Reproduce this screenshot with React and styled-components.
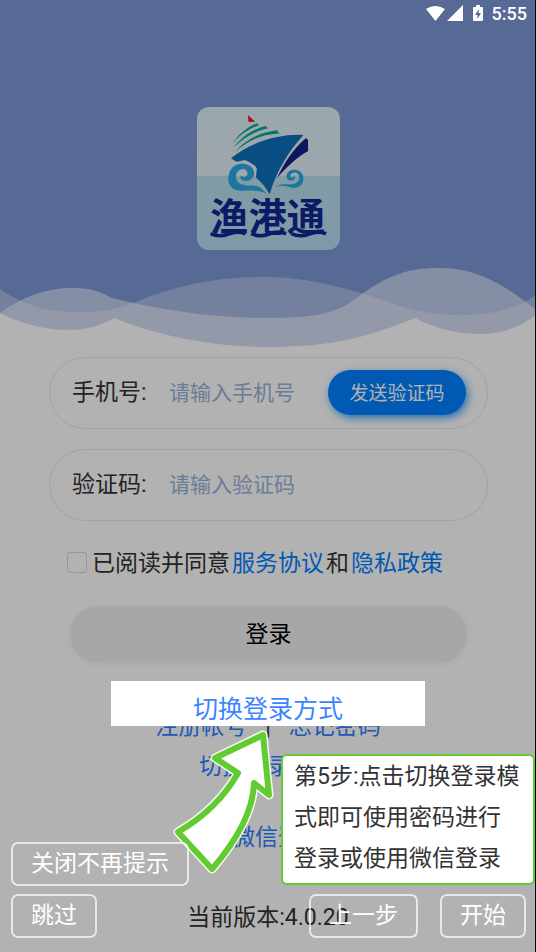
import React from 'react';
import styled, { createGlobalStyle } from 'styled-components';

const GlobalStyle = createGlobalStyle`
  * { box-sizing: border-box; }
  body {
    margin: 0;
    background: #fff;
    font-family: Roboto, "Noto Sans CJK SC", sans-serif;
    font-size: 23px;
    line-height: 28px;
    color: #333;
  }
  button, input { font-family: inherit; }
`;

const Screen = styled.div`
  position: relative;
  min-height: 100vh;
  overflow: hidden;
  display: flex;
  flex-direction: column;
`;

const Hero = styled.header`
  background: linear-gradient(#7c99d6 0 90%, #fff 90%);
  display: flex;
  flex-direction: column;
  align-items: center;
`;

const StatusBar = styled.div`
  position: relative;
  z-index: 3;
  align-self: stretch;
  height: 27px;
  padding-right: 9px;
  display: flex;
  justify-content: flex-end;
  align-items: center;
  color: #fff;
  font-size: 18px;
  font-weight: 500;
  line-height: 27px;
`;

const StatusIcons = styled.svg`
  width: 58px;
  height: 18px;
  margin-right: 8px;
`;

const Logo = styled.svg`
  width: 143px;
  height: 143px;
  margin: 80px 0 10px;
  border-radius: 12px;
`;

const LogoText = styled.text`
  font-family: "Noto Sans CJK SC", sans-serif;
  font-weight: 700;
  font-size: 115px;
  fill: #122891;
`;

const Waves = styled.svg`
  display: block;
  width: 100%;
  height: 90px;
`;

const Form = styled.form`
  display: flex;
  flex-direction: column;
  padding: 7px 48px 0 49px;
`;

const Field = styled.div`
  display: flex;
  align-items: center;
  height: 72px;
  padding: 0 21px 1px 22px;
  margin-bottom: 20px;
  border: 1px solid #e9e9e9;
  border-radius: 36px;
`;

const FieldLabel = styled.label`
  width: 97px;
  flex: none;
`;

const FieldInput = styled.input`
  flex: 1;
  min-width: 0;
  padding: 0;
  border: 0;
  outline: 0;
  background: none;
  font-size: 21px;
  line-height: 28px;
  color: #333;
  &::placeholder { color: #99b3da; opacity: 1; }
`;

const SendButton = styled.button`
  flex: none;
  width: 138px;
  height: 45px;
  padding: 0 0 2px;
  border: 0;
  border-radius: 23px;
  background: #0080ff;
  box-shadow: 2px 3px 8px rgba(0, 128, 255, 0.75);
  color: #fff;
  font-size: 19px;
`;

const Agreement = styled.div`
  display: flex;
  align-items: center;
  margin: 9px 0 28px 18px;
  white-space: nowrap;
`;

const Checkbox = styled.input`
  appearance: none;
  width: 20px;
  height: 21px;
  margin: 0 5px 3px 0;
  border: 1px solid #d8d8d8;
  border-radius: 3px;
  background: #fff;
`;

const PolicyLink = styled.a`
  padding: 0 2px;
  color: #0080ff;
  text-decoration: none;
`;

const LoginButton = styled.button`
  height: 57px;
  margin: 0 21px;
  padding: 0 0 6px;
  border: 0;
  border-radius: 29px;
  background: #f0f0f0;
  box-shadow: 0 1px 6px rgba(0, 0, 0, 0.05);
  color: #000;
  font-size: 23px;
`;

const LinkRow = styled.nav`
  display: flex;
  justify-content: center;
  gap: 18px;
  margin-top: ${(p) => p.$space}px;
  padding-left: ${(p) => p.$indent || 0}px;
`;

const TextLink = styled.a`
  color: #2c82ff;
  text-decoration: none;
`;

const Version = styled.p`
  margin: 52px 0 19px;
  text-align: center;
`;

const Guide = styled.section`
  position: absolute;
  inset: 0;
  z-index: 2;
  background: rgba(0, 0, 0, 0.3);
  border-right: 1px solid #000;
`;

const Highlight = styled.button`
  position: absolute;
  top: 681px;
  left: 111px;
  width: 314px;
  height: 45px;
  padding: 12px 0 0;
  border: 0;
  background: #fff;
  color: #3d85ff;
  font-size: 25px;
  line-height: 33px;
`;

const Arrow = styled.svg`
  position: absolute;
  top: 726px;
  left: 168px;
  width: 112px;
  height: 152px;
`;

const Tip = styled.p`
  position: absolute;
  top: 754px;
  right: 0;
  width: 254px;
  margin: 0;
  padding: 0 0 4px 11px;
  border: 2px solid #62cb31;
  border-radius: 6px;
  background: #fff;
  line-height: 41px;
  white-space: nowrap;
`;

const GuideBar = styled.div`
  position: absolute;
  left: 11px;
  right: 9px;
  bottom: 14px;
  display: flex;
  flex-direction: column;
  align-items: flex-start;
  gap: 8px;
`;

const GuideActions = styled.div`
  align-self: stretch;
  display: flex;
  gap: 22px;
`;

const GuideButton = styled.button`
  height: 44px;
  padding: 0 18px 1px;
  margin-left: ${(p) => (p.$push ? 'auto' : '0')};
  border: 2px solid rgba(255, 255, 255, 0.7);
  border-radius: 7px;
  background: none;
  color: #fff;
  font-size: 23px;
  line-height: 28px;
`;

const ARROW_SHAPE =
  'M263 735L215 758L238 773C225 796 204 817 178 832L212 869C237 840 253 812 254 783L269 795Z';

function ShipLogo() {
  return (
    <Logo viewBox="53 51 430 430" role="img" aria-label="渔港通">
      <defs>
        <linearGradient id="sky" x1="0" y1="0" x2="0" y2="1">
          <stop offset="0" stopColor="#dceff5" />
          <stop offset="1" stopColor="#e2f0f6" />
        </linearGradient>
        <linearGradient id="sea" x1="0" y1="0" x2="0" y2="1">
          <stop offset="0" stopColor="#bae0ec" />
          <stop offset="1" stopColor="#b6dcf3" />
        </linearGradient>
      </defs>
      <rect x="53" y="51" width="430" height="208" fill="url(#sky)" />
      <rect x="53" y="258" width="430" height="223" fill="url(#sea)" />
      <path d="M206 75L228 95L208 96Z" fill="#f01528" />
      <g fill="#0ba996">
        <path d="M159 162C177 134 203 111 234 100L239 106C207 117 181 136 159 162Z" />
        <path d="M163 173C186 142 220 117 260 108L266 116C226 124 192 144 163 173Z" />
        <path d="M168 186C199 148 246 126 294 121L300 131C246 134 205 152 168 186Z" />
      </g>
      <path d="M155 205C215 158 292 132 373 135C327 186 294 240 271 314C263 296 250 281 230 262L233 237C228 224 216 222 207 215C195 207 183 214 172 216Z" fill="#0e70bc" />
      <path d="M381 144L387 151V183C353 202 325 228 293 265C315 220 342 176 381 144Z" fill="#122085" />
      <path d="M262 311C236 301 211 302 189 303C161 304 147 290 147 267C147 239 166 221 190 222C211 223 224 235 225 249C226 265 211 276 195 273C185 271 181 264 185 257C190 264 201 263 204 255C208 244 198 236 188 238C174 241 168 254 171 267C175 287 201 288 219 287C238 287 250 299 262 311Z" fill="#29aae6" />
      <path d="M289 292C306 278 321 285 340 283C354 281 363 271 360 260C358 249 347 245 339 250C331 254 334 266 341 263C345 261 345 258 346 256C351 264 345 272 336 272C326 272 320 263 323 253C327 242 338 238 350 240C366 243 374 255 373 269C371 288 355 297 335 293C317 289 307 285 289 292Z" fill="#29aae6" />
      <LogoText x="93" y="425">渔港通</LogoText>
      <path d="M94 432Q120 444 147 433T199 432M216 432Q242 444 269 433T321 432M337 432Q363 444 390 433T441 432" fill="none" stroke="#122891" strokeWidth="11" />
    </Logo>
  );
}

export default function App() {
  return (
    <>
      <GlobalStyle />
      <Screen>
        <Hero>
          <StatusBar>
            <StatusIcons viewBox="0 0 58 18" fill="#fff" aria-hidden="true">
              <path d="M0 4Q9 -2 19 4L9.500 16Z" />
              <path d="M21 16L37 0V16Z" />
              <path fillRule="evenodd" d="M50 0H54V2H56Q57 2 57 3V15Q57 16 56 16H48Q47 16 47 15V3Q47 2 48 2H50ZM53 4L49 10H51.500V14L55 8H52.500Z" />
            </StatusIcons>
            <time>5:55</time>
          </StatusBar>
          <ShipLogo />
          <Waves viewBox="0 260 536 90" preserveAspectRatio="none" aria-hidden="true">
            <rect x="0" y="260" width="536" height="90" fill="#7c99d6" />
            <path d="M0 289C24 306 49 312 78 312C103 312 119 309 136 302C175 286 214 277 266 277C309 277 352 289 400 306C430 316 465 317 490 313C512 309 526 302 536 295V350H0Z" fill="#fff" fillOpacity=".32" />
            <path d="M0 313C25 295 48 288 72 288C93 288 100 292 112 298C160 310 214 318 266 318C315 318 337 314 358 297C388 274 411 268 438 268C474 268 500 281 536 310V350H0Z" fill="#fff" fillOpacity=".5" />
            <path d="M0 313C24 325 47 330 68 330C86 330 100 326 114 318C164 338 217 347 270 347C326 347 364 339 415 318C439 330 458 334 481 334C502 334 520 327 536 315V350H0Z" fill="#fff" />
          </Waves>
        </Hero>
        <Form onSubmit={(e) => e.preventDefault()}>
          <Field>
            <FieldLabel htmlFor="phone">手机号:</FieldLabel>
            <FieldInput id="phone" type="tel" placeholder="请输入手机号" />
            <SendButton type="button">发送验证码</SendButton>
          </Field>
          <Field>
            <FieldLabel htmlFor="code">验证码:</FieldLabel>
            <FieldInput id="code" type="text" placeholder="请输入验证码" />
          </Field>
          <Agreement>
            <Checkbox id="agree" type="checkbox" />
            <label htmlFor="agree">已阅读并同意</label>
            <PolicyLink href="#service">服务协议</PolicyLink>
            <span>和</span>
            <PolicyLink href="#privacy">隐私政策</PolicyLink>
          </Agreement>
          <LoginButton type="submit">登录</LoginButton>
        </Form>
        <LinkRow $space={50}>
          <TextLink href="#register">注册帐号</TextLink>
          <span>|</span>
          <TextLink href="#forgot">忘记密码</TextLink>
        </LinkRow>
        <LinkRow $space={12}>
          <TextLink href="#switch">切换登录方式</TextLink>
        </LinkRow>
        <LinkRow $space={43} $indent={20}>
          <TextLink href="#wechat">微信登录</TextLink>
        </LinkRow>
        <Version>当前版本:4.0.20</Version>
        <Guide>
          <Highlight type="button">切换登录方式</Highlight>
          <Arrow viewBox="168 726 112 152" aria-hidden="true">
            <path d={ARROW_SHAPE} fill="#fff" stroke="#f4fbef" strokeWidth="9" strokeLinejoin="round" />
            <path d={ARROW_SHAPE} fill="#fff" stroke="#62cb31" strokeWidth="6" strokeLinejoin="round" />
          </Arrow>
          <Tip>
            第5步:点击切换登录模<br />
            式即可使用密码进行<br />
            登录或使用微信登录
          </Tip>
          <GuideBar>
            <GuideButton type="button">关闭不再提示</GuideButton>
            <GuideActions>
              <GuideButton type="button">跳过</GuideButton>
              <GuideButton type="button" $push>上一步</GuideButton>
              <GuideButton type="button">开始</GuideButton>
            </GuideActions>
          </GuideBar>
        </Guide>
      </Screen>
    </>
  );
}
